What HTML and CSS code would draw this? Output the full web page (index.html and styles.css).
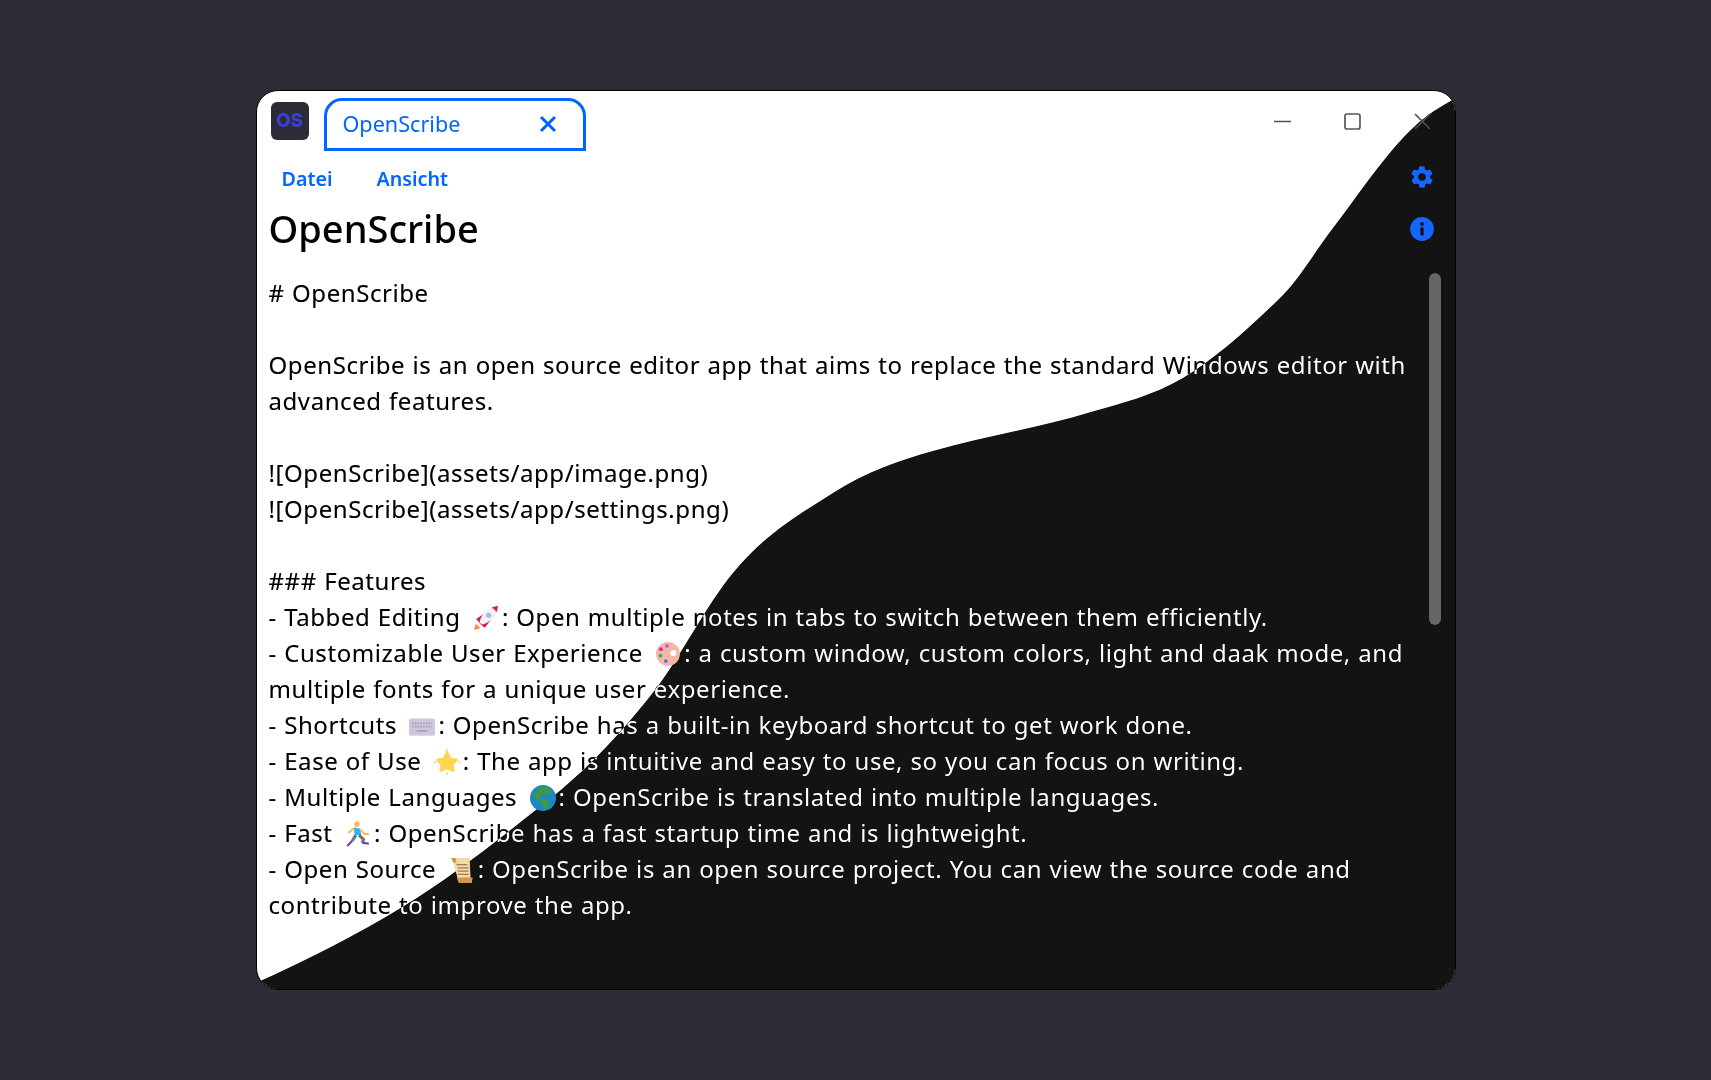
FILE: index.html
```html
<!DOCTYPE html>
<html lang="en">
<head>
  <meta charset="UTF-8" />
  <title>OpenScribe</title>
  <link rel="stylesheet" href="styles.css">
</head>
<body>
  <div class="window">
    <svg class="wave" viewBox="0 0 1200 900" aria-hidden="true">
      <path id="wavePath" d="M0 893 C49 871 99 846 148 816 C197 786 246 747 295 708 C330 680 364 645 399 600 C425 566 451 514 477 483 C510 443 544 424 577 403 C610 382 644 370 677 361 C730 346 782 338 835 322 C866 313 896 306 927 288 C960 268 994 238 1027 205 C1044 188 1060 160 1077 138 C1104 103 1130 63 1157 38 C1171 24 1186 16 1200 8 L1200 900 L0 900 Z"/>
    </svg>

    <header class="titlebar">
      <div class="logo">OS</div>
      <div class="tab">
        <span>OpenScribe</span>
        <svg class="tab-close" viewBox="0 0 20 20"><path d="M3 3 L17 17 M17 3 L3 17"/></svg>
      </div>
      <div class="win-controls">
        <svg viewBox="0 0 18 18"><path d="M0 8.5 H17"/></svg>
        <svg viewBox="0 0 18 18"><rect x="1" y="1" width="15" height="15" rx="2"/></svg>
        <svg viewBox="0 0 18 18"><path d="M1 1 L16 16 M16 1 L1 16"/></svg>
      </div>
    </header>

    <div class="main">
      <div class="content">
        <nav class="menu"><a>Datei</a><a>Ansicht</a></nav>
        <h1>OpenScribe</h1>
        <div class="note">
          <p><span class="ink"># OpenScribe</span></p>
          <p class="gap"><span class="ink">OpenScribe is an open source editor app that aims to replace the standard Windows editor with</span><br><span class="ink">advanced features.</span></p>
          <p class="gap"><span class="ink">![OpenScribe](assets/app/image.png)</span></p>
          <p><span class="ink">![OpenScribe](assets/app/settings.png)</span></p>
          <p class="gap"><span class="ink">### Features</span></p>
          <p><span class="ink">- Tabbed Editing </span><svg class="emoji" viewBox="0 0 24 24"><path fill="#ff8a50" d="M1 23 L2.5 17 L7 21.5 Z"/><path fill="#d81b4a" d="M3 13 L10 8 L12 12 L7 18 Z M11 21 L16 14 L12 12 L7 18 Z"/><path fill="#f7eef0" d="M6 16 C7 10 12 4 18 2 L22 6 C20 12 14 17 8 18 Z"/><path fill="#d81b4a" d="M17 2.5 C19 1.5 21 1 23 1 C23 3 22.5 5 21.5 7 C21 5 19 3 17 2.5 Z"/><circle cx="14.5" cy="9.5" r="2.4" fill="#8ec5f0"/></svg><span class="ink">: Open multiple notes in tabs to switch between them efficiently.</span></p>
          <p><span class="ink">- Customizable User Experience </span><svg class="emoji" viewBox="0 0 24 24"><circle cx="12" cy="12" r="11" fill="#f7b5a8"/><circle cx="17" cy="11" r="2.8" fill="#fff"/><circle cx="11" cy="4.5" r="1.7" fill="#9c6ade"/><circle cx="5.5" cy="7.5" r="1.7" fill="#e91e8c"/><circle cx="5" cy="13.5" r="1.7" fill="#2db84d"/><circle cx="10" cy="18.5" r="1.7" fill="#4f6fe8"/></svg><span class="ink">: a custom window, custom colors, light and daak mode, and</span><br><span class="ink">multiple fonts for a unique user experience.</span></p>
          <p><span class="ink">- Shortcuts </span><svg class="emoji" viewBox="0 0 24 24"><rect x="0" y="5" width="24" height="16" rx="2" fill="#cfc6dc"/><path stroke="#a89fb8" stroke-width="1.6" stroke-dasharray="1.5 1" d="M3 9.5 H21 M3 12.5 H21"/><path stroke="#a89fb8" stroke-width="1.6" d="M7 16.5 H17"/></svg><span class="ink">: OpenScribe has a built-in keyboard shortcut to get work done.</span></p>
          <p><span class="ink">- Ease of Use </span><svg class="emoji" viewBox="0 0 24 24"><path fill="#ffd54f" stroke="#ffd54f" stroke-width="2" stroke-linejoin="round" d="M12 3 L15 9 L21 10 L17 14.5 L18 20 L12 17.5 L6 20 L7 14.5 L3 10 L9 9 Z"/><circle cx="12" cy="1" r="1" fill="#ffd54f"/><circle cx="1" cy="12" r="1" fill="#ffd54f"/><circle cx="23" cy="12" r="1" fill="#ffd54f"/><circle cx="12" cy="23" r="1" fill="#ffd54f"/></svg><span class="ink">: The app is intuitive and easy to use, so you can focus on writing.</span></p>
          <p><span class="ink">- Multiple Languages </span><svg class="emoji" viewBox="0 0 24 24"><circle cx="12" cy="12" r="12" fill="#1e88c5"/><path fill="#3d9a40" d="M9 2 L16 1.5 L20 6 L18 9 L12 8 L8 11 L11 13 L15 13 L18 17 L15 22 L12 22 L11 16 L6 14 L3 9 Z"/></svg><span class="ink">: OpenScribe is translated into multiple languages.</span></p>
          <p><span class="ink">- Fast </span><svg class="emoji" viewBox="0 0 24 24"><circle cx="11" cy="3" r="2.5" fill="#ffb74d"/><path fill="#29b6f6" d="M8 6 L14 7 L15 13 L9 13 Z"/><path stroke="#ffb74d" stroke-width="1.8" fill="none" d="M8 7 L3 11 M14 8 L18 12 L22 12"/><path stroke="#757575" stroke-width="3" fill="none" d="M10 13 L7 18 M13 13 L17 17 L16 20"/><path stroke="#6a3fb5" stroke-width="2" fill="none" d="M7 18 L2 23 M16 20 L22 21"/></svg><span class="ink">: OpenScribe has a fast startup time and is lightweight.</span></p>
          <p><span class="ink">- Open Source </span><svg class="emoji" viewBox="0 0 24 24"><path fill="#f5d9a8" d="M3 1 H19 L20 20 H8 Z"/><path fill="#d9924a" d="M2 1 H6 L7 5 H4 Z M7 19 H22 L21 24 H9 Z"/><path stroke="#a07a50" d="M7 7 H17 M8 10 H18 M8 13 H18 M8 16 H18"/></svg><span class="ink">: OpenScribe is an open source project. You can view the source code and</span><br><span class="ink">contribute to improve the app.</span></p>
        </div>
      </div>
      <aside class="side">
        <svg class="side-icon" viewBox="0 0 24 24"><path d="M19.4 13a7.6 7.6 0 0 0 0-2l2.1-1.6a.5.5 0 0 0 .1-.6l-2-3.5a.5.5 0 0 0-.6-.2l-2.5 1a7.4 7.4 0 0 0-1.7-1l-.4-2.7a.5.5 0 0 0-.5-.4h-4a.5.5 0 0 0-.5.4l-.4 2.7a7.4 7.4 0 0 0-1.7 1l-2.5-1a.5.5 0 0 0-.6.2l-2 3.5a.5.5 0 0 0 .1.6L4.6 11a7.6 7.6 0 0 0 0 2l-2.1 1.6a.5.5 0 0 0-.1.6l2 3.5a.5.5 0 0 0 .6.2l2.5-1a7.4 7.4 0 0 0 1.7 1l.4 2.7a.5.5 0 0 0 .5.4h4a.5.5 0 0 0 .5-.4l.4-2.7a7.4 7.4 0 0 0 1.7-1l2.5 1a.5.5 0 0 0 .6-.2l2-3.5a.5.5 0 0 0-.1-.6zM12 15.5a3.5 3.5 0 1 1 0-7 3.5 3.5 0 0 1 0 7z"/></svg>
        <svg class="side-icon" viewBox="0 0 24 24"><path d="M12 1a11 11 0 1 0 0 22 11 11 0 0 0 0-22zm1.4 17h-2.8v-7.5h2.8zM12 9a1.7 1.7 0 1 1 0-3.4A1.7 1.7 0 0 1 12 9z"/></svg>
        <div class="scrollbar"></div>
      </aside>
    </div>

    <!-- lifts the black under the text to the real dark grey, text stays white -->
    <svg class="wave wave-tint" viewBox="0 0 1200 900" aria-hidden="true"><use href="#wavePath"/></svg>
  </div>
</body>
</html>
```
FILE: styles.css
```css
* {
  box-sizing: border-box;
}
body {
  margin: 0;
  height: 1080px;
  background-color: #2b2c36;
  display: flex;
  align-items: center;
  justify-content: center;
  font-family: "Noto Sans", sans-serif;
}
.window {
  width: 1200px;
  height: 900px;
  background-color: #fff;
  border: 1px solid #000;
  border-radius: 22px;
  overflow: hidden;
  position: relative;
  isolation: isolate;
  display: flex;
  flex-direction: column;
}
.wave {
  position: absolute;
  left: -1px;
  top: -1px;
  width: 1200px;
  height: 900px;
  fill: #000;
}
.wave-tint {
  fill: #131313;
  mix-blend-mode: lighten;
  pointer-events: none;
}
.titlebar {
  position: relative;
  display: flex;
  align-items: flex-start;
  padding: 7px 23px 0 14px;
  height: 60px;
}
.logo {
  width: 38px;
  height: 38px;
  margin-top: 4px;
  background-color: #2b2c36;
  border-radius: 6px;
  color: #3a3fd0;
  font-family: Inter, sans-serif;
  font-weight: 800;
  font-size: 19px;
  line-height: 38px;
  text-align: center;
}
.tab {
  width: 262px;
  height: 53px;
  margin-left: 15px;
  padding: 0 15px 2px 16px;
  border: 3px solid #0066ff;
  border-radius: 18px 18px 0 0;
  color: #0066ff;
  font-size: 21.6px;
  display: flex;
  align-items: center;
  justify-content: space-between;
}
.tab-close {
  width: 20px;
  height: 20px;
  margin-right: 10px;
  fill: none;
  stroke: #0066ff;
  stroke-width: 3;
}
.win-controls {
  margin-left: auto;
  display: flex;
  gap: 52px;
  padding-top: 15px;
}
.win-controls svg {
  width: 18px;
  height: 18px;
  fill: none;
  stroke: #555;
  stroke-width: 1.7;
}
.main {
  position: relative;
  flex: 1;
  display: flex;
}
.content {
  flex: 1;
  min-width: 0;
  padding-left: 12px;
}
.menu {
  display: flex;
  gap: 44px;
  padding-left: 13px;
  font-size: 19.7px;
  font-weight: 600;
  color: #0066ff;
  line-height: 28px;
  margin-top: 14px;
}
h1 {
  margin: 9px 0 21px;
  font-size: 38px;
  font-weight: 500;
  line-height: 52px;
  color: #000;
}
.note {
  width: 1150px;
  font-size: 24px;
  line-height: 36px;
  letter-spacing: 0.57px;
  word-spacing: 0.6px;
}
.note p {
  margin: 0;
}
.note .gap {
  margin-top: 36px;
}
.ink {
  color: #fff;
  mix-blend-mode: difference;
}
.emoji {
  width: 26px;
  height: 26px;
  margin: 0 3px 0 5px;
  vertical-align: -5px;
}
.side {
  flex: none;
  width: 66px;
  display: flex;
  flex-direction: column;
  align-items: center;
  position: relative;
}
.side-icon {
  width: 26px;
  height: 26px;
  fill: #0066ff;
  margin-top: 13px;
  margin-bottom: 13px;
}
.scrollbar {
  position: absolute;
  left: 40px;
  top: 122px;
  width: 12px;
  height: 352px;
  border-radius: 6px;
  background-color: #666;
}
```
